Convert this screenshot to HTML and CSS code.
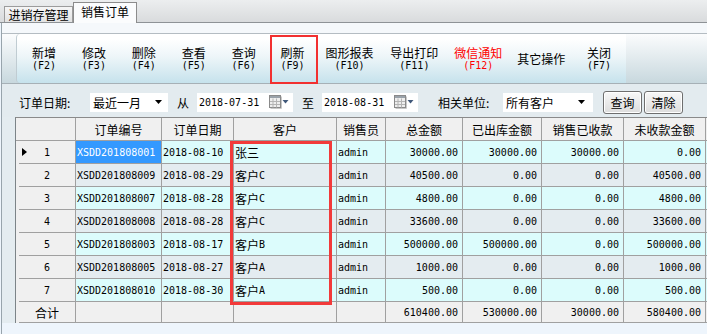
FILE: index.html
```html
<!DOCTYPE html>
<html lang="zh-CN">
<head>
<meta charset="utf-8">
<title>销售订单</title>
<link rel="stylesheet" href="styles.css">
</head>
<body>
<div class="app">
  <div class="tabs">
    <div class="tab">进销存管理</div>
    <div class="tab active">销售订单</div>
  </div>
  <div class="panel">
    <div class="panel-top"></div>
    <div class="toolbar-wrap">
      <div class="toolbar">
        <div class="tb-btn"><span class="tb-label">新增</span><span class="tb-key mono">(F2)</span></div>
        <div class="tb-btn"><span class="tb-label">修改</span><span class="tb-key mono">(F3)</span></div>
        <div class="tb-btn"><span class="tb-label">删除</span><span class="tb-key mono">(F4)</span></div>
        <div class="tb-btn"><span class="tb-label">查看</span><span class="tb-key mono">(F5)</span></div>
        <div class="tb-btn"><span class="tb-label">查询</span><span class="tb-key mono">(F6)</span></div>
        <div class="tb-btn w48 marked"><span class="tb-label">刷新</span><span class="tb-key mono">(F9)</span></div>
        <div class="tb-btn w66"><span class="tb-label">图形报表</span><span class="tb-key mono">(F10)</span></div>
        <div class="tb-btn w64"><span class="tb-label">导出打印</span><span class="tb-key mono">(F11)</span></div>
        <div class="tb-btn w64 alert"><span class="tb-label">微信通知</span><span class="tb-key mono">(F12)</span></div>
        <div class="tb-btn w62"><span class="tb-label">其它操作</span></div>
        <div class="tb-btn w54"><span class="tb-label">关闭</span><span class="tb-key mono">(F7)</span></div>
      </div>
    </div>
    <div class="filter">
      <span class="f-label">订单日期:</span>
      <div class="combo c-range"><span>最近一月</span><svg class="arrow" width="7" height="4" viewBox="0 0 7 4"><path d="M0 0h7l-3.5 4z" fill="#000"/></svg></div>
      <span class="f-sep">从</span>
      <div class="datebox"><span class="mono">2018-07-31</span>
        <svg class="cal" width="20" height="14" viewBox="0 0 20 14"><rect x="0.5" y="0.5" width="11" height="12" fill="#eeeeee" stroke="#8a8a8a"/><rect x="1" y="1" width="10" height="2" fill="#9aa2aa"/><path d="M4 3.5v9M7.5 3.5v9M1 6.5h10M1 9.5h10" stroke="#b4b4b4"/><path d="M12.5 1.5v12h-11" stroke="#c8c8c8" fill="none"/><path d="M13.5 5h6l-3 3.5z" fill="#40587a"/></svg>
      </div>
      <span class="f-sep">至</span>
      <div class="datebox"><span class="mono">2018-08-31</span>
        <svg class="cal" width="20" height="14" viewBox="0 0 20 14"><rect x="0.5" y="0.5" width="11" height="12" fill="#eeeeee" stroke="#8a8a8a"/><rect x="1" y="1" width="10" height="2" fill="#9aa2aa"/><path d="M4 3.5v9M7.5 3.5v9M1 6.5h10M1 9.5h10" stroke="#b4b4b4"/><path d="M12.5 1.5v12h-11" stroke="#c8c8c8" fill="none"/><path d="M13.5 5h6l-3 3.5z" fill="#40587a"/></svg>
      </div>
      <span class="f-label f-unit">相关单位:</span>
      <div class="combo c-cust"><span>所有客户</span><svg class="arrow" width="7" height="4" viewBox="0 0 7 4"><path d="M0 0h7l-3.5 4z" fill="#000"/></svg></div>
      <div class="btn b-query">查询</div>
      <div class="btn b-clear">清除</div>
    </div>
    <div class="grid-wrap">
      <div class="grid">
        <div class="row head">
          <div class="cell rh"></div>
          <div class="cell c">订单编号</div>
          <div class="cell c">订单日期</div>
          <div class="cell c">客户</div>
          <div class="cell c">销售员</div>
          <div class="cell c">总金额</div>
          <div class="cell c">已出库金额</div>
          <div class="cell c">销售已收款</div>
          <div class="cell c">未收款金额</div>
          <div class="cell c"></div>
        </div>
        <div class="row odd">
          <div class="cell rh"><div class="rh-in mono"><svg class="cur" width="5" height="8" viewBox="0 0 5 8"><path d="M0 0l5 4-5 4z" fill="#000"/></svg>1</div></div>
          <div class="cell l mono sel">XSDD201808001</div>
          <div class="cell l mono">2018-08-10</div>
          <div class="cell l cust">张三</div>
          <div class="cell l mono">admin</div>
          <div class="cell r mono">30000.00</div>
          <div class="cell r mono">30000.00</div>
          <div class="cell r mono">30000.00</div>
          <div class="cell r mono">0.00</div>
          <div class="cell"></div>
        </div>
        <div class="row">
          <div class="cell rh"><div class="rh-in mono">2</div></div>
          <div class="cell l mono">XSDD201808009</div>
          <div class="cell l mono">2018-08-29</div>
          <div class="cell l cust">客户<span class="mono">C</span></div>
          <div class="cell l mono">admin</div>
          <div class="cell r mono">40500.00</div>
          <div class="cell r mono">0.00</div>
          <div class="cell r mono">0.00</div>
          <div class="cell r mono">40500.00</div>
          <div class="cell"></div>
        </div>
        <div class="row odd">
          <div class="cell rh"><div class="rh-in mono">3</div></div>
          <div class="cell l mono">XSDD201808007</div>
          <div class="cell l mono">2018-08-28</div>
          <div class="cell l cust">客户<span class="mono">C</span></div>
          <div class="cell l mono">admin</div>
          <div class="cell r mono">4800.00</div>
          <div class="cell r mono">0.00</div>
          <div class="cell r mono">0.00</div>
          <div class="cell r mono">4800.00</div>
          <div class="cell"></div>
        </div>
        <div class="row">
          <div class="cell rh"><div class="rh-in mono">4</div></div>
          <div class="cell l mono">XSDD201808008</div>
          <div class="cell l mono">2018-08-28</div>
          <div class="cell l cust">客户<span class="mono">C</span></div>
          <div class="cell l mono">admin</div>
          <div class="cell r mono">33600.00</div>
          <div class="cell r mono">0.00</div>
          <div class="cell r mono">0.00</div>
          <div class="cell r mono">33600.00</div>
          <div class="cell"></div>
        </div>
        <div class="row odd">
          <div class="cell rh"><div class="rh-in mono">5</div></div>
          <div class="cell l mono">XSDD201808003</div>
          <div class="cell l mono">2018-08-17</div>
          <div class="cell l cust">客户<span class="mono">B</span></div>
          <div class="cell l mono">admin</div>
          <div class="cell r mono">500000.00</div>
          <div class="cell r mono">500000.00</div>
          <div class="cell r mono">0.00</div>
          <div class="cell r mono">500000.00</div>
          <div class="cell"></div>
        </div>
        <div class="row">
          <div class="cell rh"><div class="rh-in mono">6</div></div>
          <div class="cell l mono">XSDD201808005</div>
          <div class="cell l mono">2018-08-27</div>
          <div class="cell l cust">客户<span class="mono">A</span></div>
          <div class="cell l mono">admin</div>
          <div class="cell r mono">1000.00</div>
          <div class="cell r mono">0.00</div>
          <div class="cell r mono">0.00</div>
          <div class="cell r mono">1000.00</div>
          <div class="cell"></div>
        </div>
        <div class="row odd">
          <div class="cell rh"><div class="rh-in mono">7</div></div>
          <div class="cell l mono">XSDD201808010</div>
          <div class="cell l mono">2018-08-30</div>
          <div class="cell l cust">客户<span class="mono">A</span></div>
          <div class="cell l mono">admin</div>
          <div class="cell r mono">500.00</div>
          <div class="cell r mono">0.00</div>
          <div class="cell r mono">0.00</div>
          <div class="cell r mono">500.00</div>
          <div class="cell"></div>
        </div>
        <div class="row total">
          <div class="cell rh"><div class="rh-in">合计</div></div>
          <div class="cell"></div>
          <div class="cell"></div>
          <div class="cell"></div>
          <div class="cell"></div>
          <div class="cell r mono">610400.00</div>
          <div class="cell r mono">530000.00</div>
          <div class="cell r mono">30000.00</div>
          <div class="cell r mono">580400.00</div>
          <div class="cell"></div>
        </div>
      </div>
    </div>
  </div>
  <div class="redbox"></div>
</div>
</body>
</html>
```
FILE: styles.css
```css
* { box-sizing: border-box; }
html, body { margin: 0; padding: 0; }
body {
  width: 707px;
  height: 334px;
  overflow: hidden;
  font-family: "Noto Sans CJK SC", "Liberation Sans", sans-serif;
  font-size: 12px;
  color: #000;
  background: #eef5fc;
}
.mono {
  font-family: "DejaVu Sans Mono", "Noto Sans CJK SC", monospace;
  font-size: 10px;
}
.app { position: relative; width: 707px; height: 334px; overflow: hidden; }

/* tabs */
.tabs {
  height: 23px;
  display: flex;
  align-items: flex-end;
  padding-left: 4px;
  background: linear-gradient(#eceeef, #d9dbdd);
  border-bottom: 1px solid #8e9296;
}
.tab {
  height: 16px;
  width: 69px;
  border: 1px solid #9c9c9c;
  border-bottom: none;
  background: linear-gradient(#f6f6f6, #e2e2e2);
  text-align: center;
  line-height: 15px;
  font-size: 12px;
}
.tab.active {
  width: 64px;
  height: 21px;
  margin-bottom: -1px;
  background: #fbfcfd;
  border-color: #8c8c8c;
  line-height: 18px;
  position: relative;
}

/* panel */
.panel {
  margin-left: 1px;
  border-left: 1px solid #98a4ac;
  height: 311px;
  background: #eef5fc;
}
.panel-top { height: 10px; background: #f5f8fb; }
.toolbar-wrap {
  height: 51px;
  border-top: 1px solid #b4bcc2;
  border-bottom: 1px solid #a6b0b6;
  background: linear-gradient(#fbfcfd, #c8d8de);
  padding-left: 14px;
}
.toolbar {
  width: 610px;
  height: 49px;
  display: flex;
  padding-left: 2px;
  background: linear-gradient(#ffffff 10%, #eef6f9 45%, #c6e2ec);
  border-left: 1px solid #c0ccd2;
  border-top-left-radius: 4px;
  border-bottom-left-radius: 4px;
}
.tb-btn {
  width: 50px;
  display: flex;
  flex-direction: column;
  align-items: center;
  justify-content: center;
  line-height: 13px;
  position: relative;
}
.tb-btn.w48 { width: 48px; }
.tb-btn.w66 { width: 66px; }
.tb-btn.w64 { width: 64px; }
.tb-btn.w62 { width: 62px; }
.tb-btn.w54 { width: 54px; }
.tb-label { font-size: 12px; }
.tb-key { line-height: 13px; }
.tb-btn.alert { color: #ff0000; }
.tb-btn.marked::after {
  content: "";
  position: absolute;
  left: 1px;
  top: 1px;
  width: 44px;
  height: 45px;
  border: 2px solid #f23030;
}

/* filter */
.filter {
  height: 33px;
  display: flex;
  align-items: center;
  padding: 3px 0 0 17px;
  background: #e3ebef;
}
.f-label { width: 52px; white-space: nowrap; }
.f-unit { margin-left: 20px; }
.f-sep { margin-left: 9px; width: 12px; }
.combo {
  height: 19px;
  background: #ffffff;
  display: flex;
  align-items: center;
  justify-content: space-between;
  padding: 0 6px 0 3px;
}
.c-range { width: 78px; margin-left: 19px; }
.c-cust { width: 90px; margin-left: 13px; padding-right: 8px; }
.datebox {
  height: 19px;
  width: 96px;
  margin-left: 8px;
  background: #ffffff;
  display: flex;
  align-items: center;
  justify-content: space-between;
  padding: 0 4px 0 2px;
}
.datebox + .f-sep { margin-left: 9px; }
.btn {
  width: 39px;
  height: 23px;
  border: 1px solid #6e6e6e;
  border-radius: 3px;
  background: linear-gradient(#f8f8f8, #dcdcdc);
  box-shadow: inset 0 0 0 1px #ffffff;
  text-align: center;
  line-height: 21px;
}
.b-query { margin-left: 10px; }
.b-clear { margin-left: 2px; }

/* grid */
.grid-wrap {
  background: #e4ecf0;
  padding-left: 13px;
  height: 206px;
  overflow: hidden;
}
.grid {
  border-left: 1px solid #7c8488;
  border-top: 1px solid #8a8a8a;
}
.row {
  display: grid;
  grid-template-columns: 60px 86px 72px 103px 49px 77px 79px 82px 82px 2px;
  height: 23px;
}
.row.total { height: 21px; }
.cell {
  border-right: 1px solid #a0a0a0;
  border-bottom: 1px solid #a0a0a0;
  white-space: nowrap;
  overflow: hidden;
  display: flex;
  align-items: center;
}
.cell.c { justify-content: center; }
.cell.l { padding-left: 1px; }
.cell.cust { padding-left: 1px; }
.cell.r { justify-content: flex-end; padding-right: 4px; }
.row.head .cell { background: #f0f0f0; }
.row.odd .cell { background: #dcfcfc; }
.row .cell.sel { background: #3399ff; color: #ffffff; }
.row.total .cell { background: #f0f0f0; }
.row .cell.rh {
  background: #f0f0f0;
  border-bottom: none;
  padding-left: 3px;
  align-items: stretch;
}
.row.head .cell.rh { border-bottom: 1px solid #a0a0a0; }
.rh-in {
  flex: 1;
  border-bottom: 1px solid #a0a0a0;
  display: flex;
  align-items: center;
  justify-content: center;
  position: relative;
}
.cur { position: absolute; left: 3px; top: 7px; }

.redbox {
  position: absolute;
  left: 230px;
  top: 141px;
  width: 102px;
  height: 164px;
  border: 3px solid #f23a3a;
}
```
